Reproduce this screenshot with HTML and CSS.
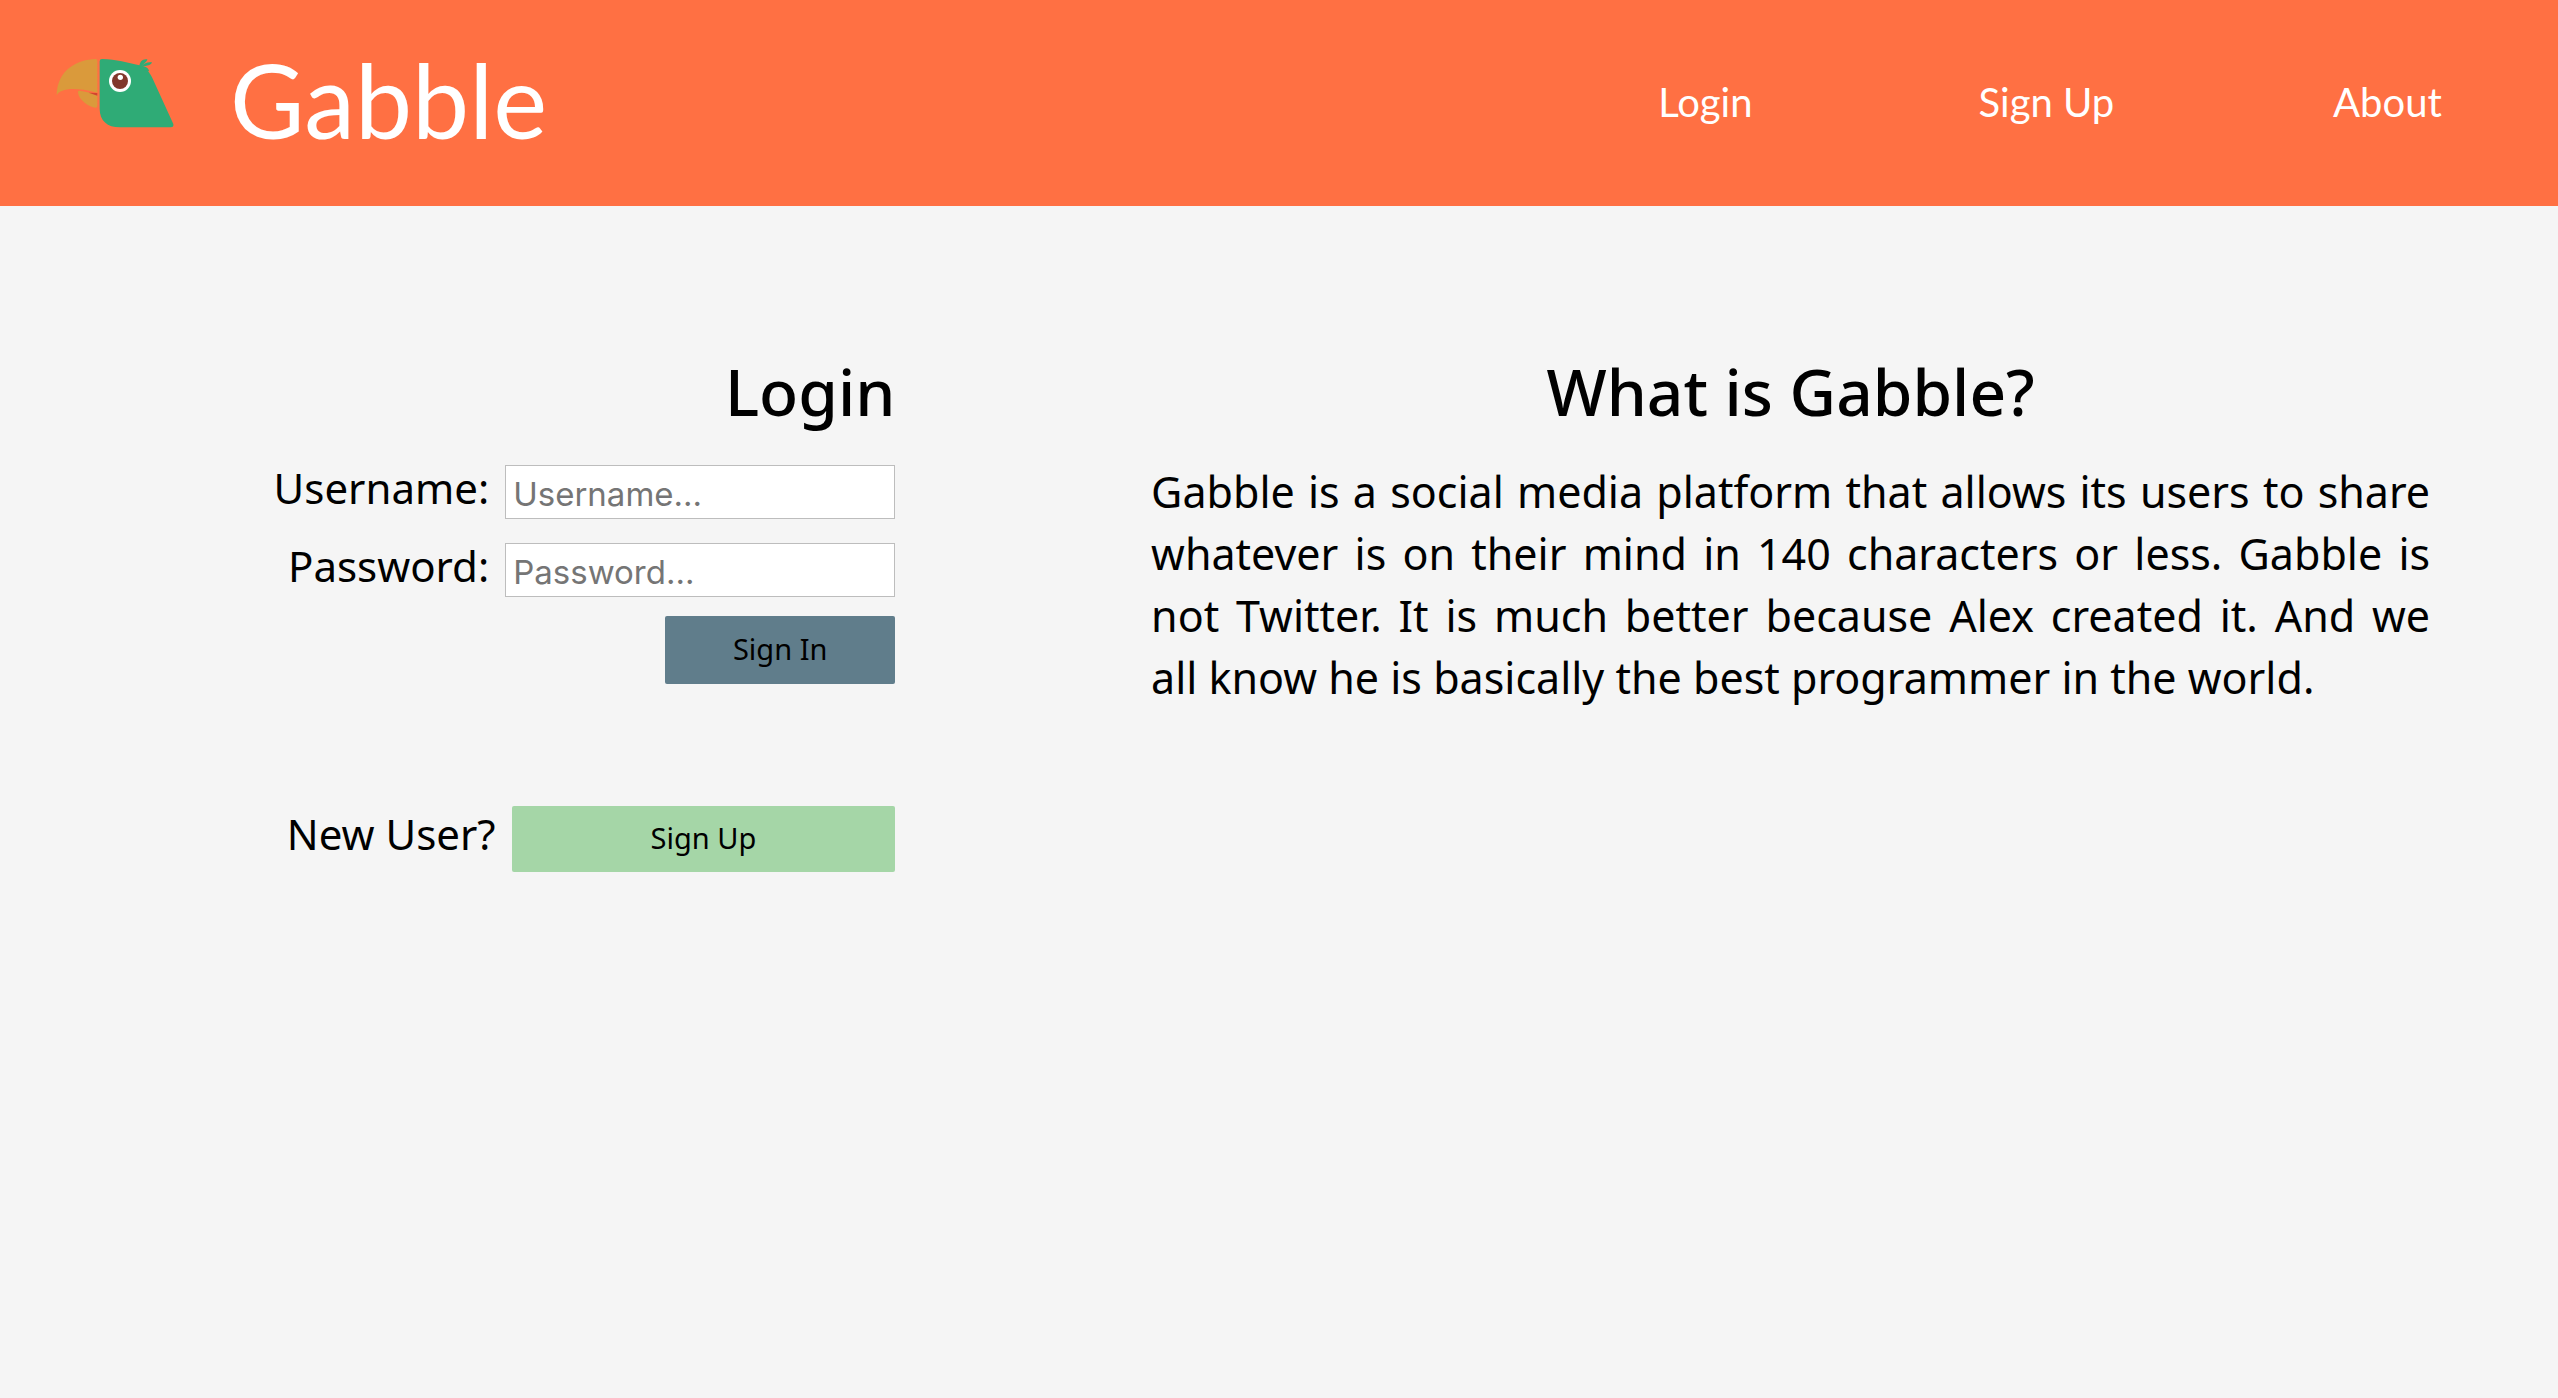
FILE: index.html
```html
<!DOCTYPE html>
<html lang="en">
<head>
<meta charset="utf-8">
<meta name="viewport" content="width=device-width, initial-scale=1">
<title>Gabble</title>
<link rel="stylesheet" href="styles.css">
</head>
<body>
<header class="site-header">
  <a class="brand" href="#">
    <svg class="brand-logo" viewBox="0 0 450 300" aria-hidden="true">
      <path fill="#da9a3b" d="M167 57C112 59 52 88 50 166C62 146 98 140 172 158V62Q172 57 167 57Z"/>
      <path fill="#da9a3b" d="M114 158C112 152 120 151 128 154L172 163V199Q172 204 165 203C146 200 116 179 114 158Z"/>
      <path fill="#d0452f" d="M146 158L172 159V167Z"/>
      <path fill="#2fab76" d="M186 57C230 59 262 67 298 76C318 82 326 94 336 112L400 252Q402 262 392 262H240C202 262 179 242 179 206V64Q179 57 186 57Z"/>
      <path fill="#2fab76" d="M298 80C299 66 306 56 322 58C321 66 312 70 305 78C312 70 323 65 336 67C334 76 320 77 309 80C318 79 327 85 327 93C316 94 309 88 302 84Z"/>
      <circle cx="240" cy="123" r="33" fill="#fff"/>
      <circle cx="240" cy="123" r="24" fill="#81372b"/>
      <circle cx="241" cy="112" r="8" fill="#fff"/>
    </svg>
    <span class="brand-name">Gabble</span>
  </a>
  <nav class="site-nav">
    <a href="#login">Login</a>
    <a href="#signup">Sign Up</a>
    <a href="#about">About</a>
  </nav>
</header>
<main class="content">
  <section class="account" id="login">
    <h1 class="title">Login</h1>
    <form class="login-form">
      <div class="row">
        <label for="username">Username:</label>
        <input id="username" type="text" placeholder="Username...">
      </div>
      <div class="row">
        <label for="password">Password:</label>
        <input id="password" type="password" placeholder="Password...">
      </div>
      <button class="button button-signin" type="submit">Sign In</button>
    </form>
    <div class="row row-signup" id="signup">
      <span class="prompt">New User?</span>
      <button class="button button-signup" type="button">Sign Up</button>
    </div>
  </section>
  <section class="about" id="about">
    <h1 class="title">What is Gabble?</h1>
    <p>Gabble is a social media platform that allows its users to share whatever is on their mind in 140 characters or less. Gabble is not Twitter. It is much better because Alex created it. And we all&nbsp;know he is basically the best programmer in the world.</p>
  </section>
</main>
</body>
</html>
```
FILE: styles.css
```css
* {
  box-sizing: border-box;
}

body {
  margin: 0;
  background: #f5f5f5;
  color: #000;
  font-family: "Noto Sans", "Open Sans", sans-serif;
  font-size: 42px;
}

.site-header {
  display: flex;
  align-items: center;
  justify-content: space-between;
  padding: 42px 0 44px 40px;
  background: #ff7043;
  font-family: Lato, sans-serif;
}

.site-header a {
  color: #fff;
  text-decoration: none;
}

.brand {
  display: flex;
  align-items: center;
  gap: 40px;
}

.brand-logo {
  width: 150px;
  height: 100px;
  margin-bottom: 24px;
}

.brand-name {
  font-size: 102px;
  line-height: 120px;
  padding-bottom: 4px;
}

.site-header .brand {
  height: 120px;
}

.site-nav {
  display: grid;
  grid-template-columns: repeat(3, 1fr);
  width: 40vw;
  font-size: 40px;
  text-align: center;
}

.content {
  display: grid;
  grid-template-columns: 1fr 2fr;
  gap: 10vw;
  padding: 148px 5vw 80px 10vw;
}

.title {
  margin: 0;
  font-size: 64px;
  font-weight: 500;
  line-height: 76px;
}

.account .title {
  text-align: right;
}

.login-form {
  display: flex;
  flex-direction: column;
  gap: 24px;
  margin-top: 35px;
}

.row {
  display: flex;
  justify-content: flex-end;
  gap: 16px;
  white-space: nowrap;
}

.row label {
  line-height: 46px;
}

.row input {
  width: 61%;
  height: 54px;
  padding: 4px 7px 0;
  border: 1px solid #bdbdbd;
  background: #fff;
  font-family: Inter, sans-serif;
  font-size: 33px;
}

.row input::placeholder {
  color: #757575;
}

.button {
  padding: 0 0 3px;
  border: 0;
  border-radius: 2px;
  color: #000;
  font-family: inherit;
  font-size: 29px;
}

.button-signin {
  align-self: flex-end;
  width: 36%;
  height: 68px;
  margin-top: -5px;
  background: #607d8b;
}

.row-signup {
  margin-top: 122px;
}

.prompt {
  line-height: 56px;
}

.button-signup {
  width: 60%;
  height: 66px;
  background: #a5d6a7;
}

.about .title {
  text-align: center;
}

.about p {
  margin: 31px 0 0;
  font-size: 43px;
  line-height: 62px;
  text-align: justify;
}
```
